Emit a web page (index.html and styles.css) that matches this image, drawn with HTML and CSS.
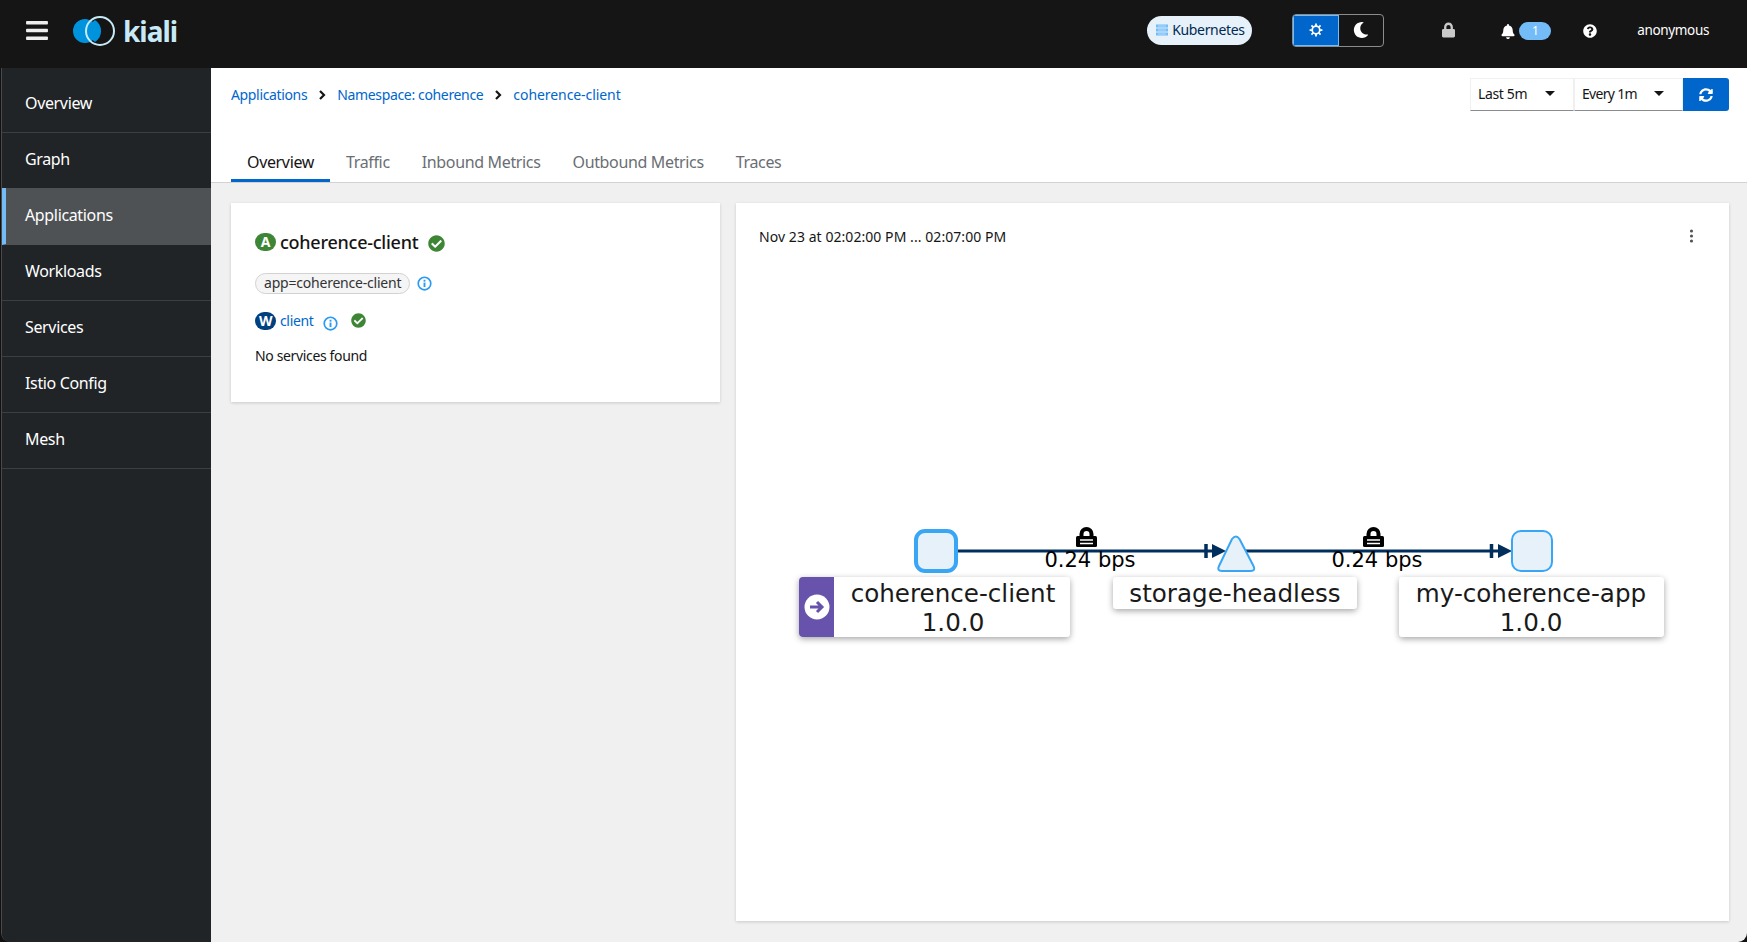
FILE: index.html
```html
<!DOCTYPE html>
<html lang="en">
<head>
    <meta charset="UTF-8">
    <title>Kiali</title>
    <link rel="stylesheet" href="styles.css">
</head>
<body>
    <svg class="sprite" xmlns="http://www.w3.org/2000/svg">
        <symbol id="i-bars" viewBox="0 0 448 512"><path d="M16 132h416c8.837 0 16-7.163 16-16V76c0-8.837-7.163-16-16-16H16C7.163 60 0 67.163 0 76v40c0 8.837 7.163 16 16 16zm0 160h416c8.837 0 16-7.163 16-16v-40c0-8.837-7.163-16-16-16H16c-8.837 0-16 7.163-16 16v40c0 8.837 7.163 16 16 16zm0 160h416c8.837 0 16-7.163 16-16v-40c0-8.837-7.163-16-16-16H16c-8.837 0-16 7.163-16 16v40c0 8.837 7.163 16 16 16z"/></symbol>
        <symbol id="i-lock" viewBox="0 0 448 512"><path d="M400 224h-24v-72C376 68.2 307.8 0 224 0S72 68.2 72 152v72H48c-26.5 0-48 21.5-48 48v192c0 26.5 21.5 48 48 48h352c26.5 0 48-21.5 48-48V272c0-26.5-21.5-48-48-48zm-104 0H152v-72c0-39.7 32.3-72 72-72s72 32.3 72 72v72z"/></symbol>
        <symbol id="i-bell" viewBox="0 0 448 512"><path d="M224 512c35.32 0 63.97-28.65 63.97-64H160.03c0 35.35 28.65 64 63.97 64zm215.39-149.71c-19.32-20.76-55.47-51.99-55.47-154.29 0-77.7-54.48-139.9-127.94-155.16V32c0-17.67-14.32-32-31.98-32s-31.98 14.33-31.98 32v20.84C118.56 68.1 64.08 130.3 64.08 208c0 102.3-36.15 133.53-55.47 154.29-6 6.45-8.66 14.16-8.61 21.71.11 16.4 12.98 32 32.1 32h383.8c19.12 0 32-15.6 32.1-32 .05-7.55-2.61-15.27-8.61-21.71z"/></symbol>
        <symbol id="i-help" viewBox="0 0 512 512"><path d="M504 256c0 136.997-111.043 248-248 248S8 392.997 8 256C8 119.083 119.043 8 256 8s248 111.083 248 248zM262.655 90c-54.497 0-89.255 22.957-116.549 63.758-3.536 5.286-2.353 12.415 2.715 16.258l34.699 26.31c5.205 3.947 12.621 3.008 16.665-2.122 17.864-22.658 30.113-35.797 57.303-35.797 20.429 0 45.698 13.148 45.698 32.958 0 14.976-12.363 22.667-32.534 33.976C247.128 238.528 216 254.941 216 296v4c0 6.627 5.373 12 12 12h56c6.627 0 12-5.373 12-12v-1.333c0-28.462 83.186-29.647 83.186-106.667 0-58.002-60.165-102-116.531-102zM256 338c-25.365 0-46 20.635-46 46 0 25.364 20.635 46 46 46s46-20.636 46-46c0-25.365-20.635-46-46-46z"/></symbol>
        <symbol id="i-check" viewBox="0 0 512 512"><path d="M504 256c0 136.967-111.033 248-248 248S8 392.967 8 256 119.033 8 256 8s248 111.033 248 248zM227.314 387.314l184-184c6.248-6.248 6.248-16.379 0-22.627l-22.627-22.627c-6.248-6.249-16.379-6.249-22.628 0L216 308.118l-70.059-70.059c-6.248-6.248-16.379-6.248-22.628 0l-22.627 22.627c-6.248 6.248-6.248 16.379 0 22.627l104 104c6.249 6.249 16.379 6.249 22.628.001z"/></symbol>
        <symbol id="i-sync" viewBox="0 0 512 512"><path d="M370.72 133.28C339.458 104.008 298.888 87.962 255.848 88c-77.458.068-144.328 53.178-162.791 126.85-1.344 5.363-6.122 9.15-11.651 9.15H24.103c-7.498 0-13.194-6.807-11.807-14.176C33.933 94.924 134.813 8 256 8c66.448 0 126.791 26.136 171.315 68.685L463.03 40.97C478.149 25.851 504 36.559 504 57.941V192c0 13.255-10.745 24-24 24H345.941c-21.382 0-32.09-25.851-16.971-40.971l41.75-41.749zM32 296h134.059c21.382 0 32.09 25.851 16.971 40.971l-41.75 41.75c31.262 29.273 71.835 45.319 114.876 45.28 77.418-.07 144.315-53.144 162.787-126.849 1.344-5.363 6.122-9.15 11.651-9.15h57.304c7.498 0 13.194 6.807 11.807 14.176C478.067 417.076 377.187 504 256 504c-66.448 0-126.791-26.136-171.315-68.685L48.97 471.03C33.851 486.149 8 475.441 8 454.059V320c0-13.255 10.745-24 24-24z"/></symbol>
        <symbol id="i-moon" viewBox="0 0 512 512"><path d="M283.211 512c78.962 0 151.079-35.925 198.857-94.792 7.068-8.708-.639-21.43-11.562-19.35-124.203 23.654-238.262-71.576-238.262-196.954 0-72.222 38.662-138.635 101.498-174.394 9.686-5.512 7.25-20.197-3.756-22.23A258.156 258.156 0 0 0 283.211 0c-141.309 0-256 114.511-256 256 0 141.309 114.511 256 256 256z"/></symbol>
        <symbol id="i-sun" viewBox="0 0 24 24"><g fill="none" stroke="currentColor"><circle cx="12" cy="12" r="6.500" stroke-width="3"/><path stroke-width="3" d="M12 1v4M12 19v4M1 12h4M19 12h4M4.200 4.200 7 7M17 17l2.800 2.800M4.200 19.800 7 17M17 7l2.800-2.800"/></g></symbol>
        <symbol id="i-info" viewBox="0 0 16 16"><circle cx="8" cy="8" r="6.700" fill="none" stroke="currentColor" stroke-width="1.800"/><rect x="7" y="7" width="2" height="4.800" fill="currentColor"/><rect x="7" y="4" width="2" height="2" fill="currentColor"/></symbol>
        <symbol id="i-chevron" viewBox="0 0 10 12"><path d="M3 2l4 4-4 4" fill="none" stroke="currentColor" stroke-width="2.200"/></symbol>
    </svg>

    <header class="topbar">
        <svg class="hamburger"><use href="#i-bars"/></svg>
        <div class="brand">
            <svg class="brand-mark" viewBox="0 0 46 32">
                <circle cx="14" cy="16" r="12" fill="#0093dd"/>
                <path d="M24 5a13 13 0 0 0 0 22a13 13 0 0 0 0 -22z" fill="#0093dd"/>
                <circle cx="29" cy="16" r="14" fill="none" stroke="#c8eaf7" stroke-width="2"/>
            </svg>
            <span class="brand-name">kiali</span>
        </div>
        <div class="cluster-pill">
            <svg class="cluster-icon" viewBox="0 0 14 14"><path d="M1 1.500h12v3H1zM1 5.500h12v3H1zM1 9.500h12v3H1z" fill="#73bcf7"/><path d="M3 3h8M3 7h8M3 11h8" stroke="#e7f1fa" stroke-width=".6"/></svg>
            Kubernetes
        </div>
        <div class="theme-toggle">
            <span class="theme-btn theme-on"><svg class="icon-sm"><use href="#i-sun"/></svg></span>
            <span class="theme-btn"><svg class="icon-moon"><use href="#i-moon"/></svg></span>
        </div>
        <svg class="top-lock"><use href="#i-lock"/></svg>
        <svg class="top-bell"><use href="#i-bell"/></svg>
        <span class="notif-badge">1</span>
        <svg class="top-help"><use href="#i-help"/></svg>
        <span class="user-name">anonymous</span>
    </header>

    <div class="layout">
        <nav class="sidebar">
            <a class="nav-item">Overview</a>
            <a class="nav-item">Graph</a>
            <a class="nav-item active">Applications</a>
            <a class="nav-item">Workloads</a>
            <a class="nav-item">Services</a>
            <a class="nav-item">Istio Config</a>
            <a class="nav-item">Mesh</a>
        </nav>

        <main class="content">
            <section class="page-head">
                <div class="crumb-row">
                    <div class="breadcrumb">
                        <a>Applications</a>
                        <svg class="crumb-sep"><use href="#i-chevron"/></svg>
                        <a>Namespace: coherence</a>
                        <svg class="crumb-sep"><use href="#i-chevron"/></svg>
                        <a class="crumb-last">coherence-client</a>
                    </div>
                    <div class="time-controls">
                        <div class="select select-range">Last 5m<span class="caret"></span></div>
                        <div class="select select-every">Every 1m<span class="caret"></span></div>
                        <button class="refresh-btn"><svg class="icon-sm"><use href="#i-sync"/></svg></button>
                    </div>
                </div>
                <div class="tabs">
                    <a class="tab tab-active">Overview</a>
                    <a class="tab">Traffic</a>
                    <a class="tab">Inbound Metrics</a>
                    <a class="tab">Outbound Metrics</a>
                    <a class="tab">Traces</a>
                </div>
            </section>

            <section class="panels">
                <div class="card card-info">
                    <div class="app-title">
                        <span class="badge badge-app">A</span>
                        <span class="app-name">coherence-client</span>
                        <svg class="icon-ok-lg"><use href="#i-check"/></svg>
                    </div>
                    <div class="label-row">
                        <span class="chip">app=coherence-client</span>
                        <svg class="icon-info"><use href="#i-info"/></svg>
                    </div>
                    <div class="workload-row">
                        <span class="badge badge-wl">W</span>
                        <a class="link">client</a>
                        <svg class="icon-info icon-low"><use href="#i-info"/></svg>
                        <svg class="icon-ok"><use href="#i-check"/></svg>
                    </div>
                    <div class="no-services">No services found</div>
                </div>

                <div class="card card-graph">
                    <div class="graph-head">
                        <span class="graph-range">Nov 23 at 02:02:00 PM ... 02:07:00 PM</span>
                        <svg class="kebab" viewBox="0 0 4 14"><circle cx="2" cy="2" r="1.600"/><circle cx="2" cy="7" r="1.600"/><circle cx="2" cy="12" r="1.600"/></svg>
                    </div>
                    <svg class="graph" viewBox="736 265 993 640">
                        <defs>
                            <filter id="label-shadow" x="-10%" y="-20%" width="120%" height="150%">
                                <feDropShadow dx="0" dy="2" stdDeviation="3" flood-color="#000" flood-opacity=".35"/>
                            </filter>
                            <g id="edge-lock">
                                <path d="M3.500 10V7a7 7 0 0 1 14 0v3h-4V7a3 3 0 0 0-6 0v3z"/>
                                <rect x="0" y="9" width="21" height="11" rx="1.500"/>
                                <path d="M4 13h13M4 16.500h13" stroke="#fff" stroke-width="1.300"/>
                            </g>
                        </defs>

                        <path class="edge" d="M958 551H1214M1240 551H1500"/>
                        <path class="edge-hash" d="M1206 544v14M1491.500 544v14"/>
                        <path class="edge-head" d="M1212 544l14 7-14 7zM1498 544l14 7-14 7z"/>

                        <rect class="node node-root" x="916" y="531" width="40" height="40" rx="9"/>
                        <path class="node" d="M1232 539Q1236 534 1239.500 539L1253.500 566Q1256 571 1250.500 571H1222Q1216.500 571 1219 566Z"/>
                        <rect class="node" x="1512" y="531" width="40" height="40" rx="9"/>

                        <use href="#edge-lock" x="1076" y="527"/>
                        <use href="#edge-lock" x="1363" y="527"/>
                        <text class="edge-text" x="1090" y="567">0.24 bps</text>
                        <text class="edge-text" x="1377" y="567">0.24 bps</text>

                        <g>
                            <rect class="label-box" x="799" y="577" width="271" height="60" rx="4"/>
                            <path class="label-tag" d="M834 577v60h-31a4 4 0 0 1-4-4v-52a4 4 0 0 1 4-4z"/>
                            <circle cx="817" cy="607" r="12.500" fill="#fff"/>
                            <path d="M810 607h11M817 602l5 5-5 5" fill="none" stroke="#6753ac" stroke-width="3"/>
                            <text class="label-text" x="953" y="602">coherence-client</text>
                            <text class="label-text" x="953" y="631">1.0.0</text>
                        </g>
                        <g>
                            <rect class="label-box" x="1113" y="577" width="244" height="32" rx="4"/>
                            <text class="label-text" x="1235" y="602">storage-headless</text>
                        </g>
                        <g>
                            <rect class="label-box" x="1399" y="577" width="265" height="60" rx="4"/>
                            <text class="label-text" x="1531" y="602">my-coherence-app</text>
                            <text class="label-text" x="1531" y="631">1.0.0</text>
                        </g>
                    </svg>
                </div>
            </section>
        </main>
    </div>
</body>
</html>
```

FILE: styles.css
```css
* {
    margin: 0;
    padding: 0;
    box-sizing: border-box;
}

body {
    display: flex;
    flex-direction: column;
    height: 942px;
    overflow: hidden;
    background: #111;
    font-family: 'Noto Sans', sans-serif;
    font-size: 14px;
    letter-spacing: -0.025em;
    color: #151515;
}

.sprite {
    display: none;
}

/* top bar */
.topbar {
    display: flex;
    align-items: center;
    height: 68px;
    flex-shrink: 0;
    background: #151515;
    color: #fff;
    padding: 0 38px 0 26px;
}

.hamburger {
    width: 22px;
    height: 25px;
    fill: #eee;
    margin-bottom: 8px;
}

.brand {
    display: flex;
    align-items: center;
    margin-left: 23px;
    margin-bottom: 6px;
}

.brand-mark {
    width: 46px;
    height: 32px;
}

.brand-name {
    font-size: 28px;
    font-weight: 700;
    line-height: 32px;
    letter-spacing: -1px;
    margin-left: 6px;
    color: #c8eaf7;
}

.cluster-pill {
    display: flex;
    align-items: center;
    gap: 3px;
    width: 105px;
    height: 29px;
    margin-left: auto;
    padding-left: 8px;
    padding-bottom: 1px;
    border-radius: 15px;
    background: #e7f1fa;
    color: #002952;
    font-size: 14px;
    margin-bottom: 8px;
}

.cluster-icon {
    width: 14px;
    height: 14px;
}

.theme-toggle {
    display: flex;
    width: 92px;
    height: 33px;
    margin-left: 40px;
    margin-bottom: 8px;
    border: 1px solid #8a8d90;
    border-radius: 4px;
    overflow: hidden;
}

.theme-btn {
    flex: 1;
    display: flex;
    align-items: center;
    justify-content: center;
    color: #fff;
}

.theme-on {
    background: #06c;
    box-shadow: inset 0 0 0 1px #73bcf7;
    flex: 0 0 46px;
}

.icon-sm {
    width: 14px;
    height: 14px;
    fill: currentColor;
}

.icon-moon {
    width: 16px;
    height: 16px;
    fill: currentColor;
}

.top-lock {
    width: 13px;
    height: 16px;
    margin-left: 58px;
    fill: #c9c9c9;
    margin-bottom: 8px;
}

.top-bell {
    width: 14px;
    height: 15px;
    margin-left: 46px;
    fill: #fff;
    margin-bottom: 6px;
}

.notif-badge {
    width: 32px;
    height: 18px;
    margin-left: 4px;
    margin-bottom: 7px;
    border-radius: 9px;
    background: #73bcf7;
    color: #fff;
    font-size: 12px;
    line-height: 18px;
    text-align: center;
}

.top-help {
    width: 14px;
    height: 14px;
    margin-left: 32px;
    fill: #fff;
    margin-bottom: 6px;
}

.user-name {
    margin-left: 40px;
    margin-bottom: 8px;
    font-size: 13.500px;
}

/* sidebar + main */
.layout {
    display: flex;
    flex: 1;
    min-height: 0;
    margin-left: 1px;
    border-left: 1px solid #4a4a4a;
    border-radius: 0 0 9px 9px;
    overflow: hidden;
}

.sidebar {
    width: 209px;
    flex-shrink: 0;
    padding-top: 9px;
    background: #212427;
}

.nav-item {
    display: block;
    height: 56px;
    padding-left: 23px;
    line-height: 53px;
    font-size: 16px;
    color: #fff;
    border-bottom: 1px solid #3c3f42;
}

.nav-item.active {
    height: 57px;
    margin-top: -1px;
    line-height: 55px;
    background: #4f5255;
    border-left: 4px solid #73bcf7;
    padding-left: 19px;
    border-bottom-color: #4f5255;
}

.content {
    flex: 1;
    min-width: 0;
    background: #f0f0f0;
}

.page-head {
    height: 115px;
    padding: 10px 18px 0 20px;
    background: #fff;
    border-bottom: 1px solid #d2d2d2;
}

.crumb-row {
    display: flex;
    justify-content: space-between;
    align-items: flex-start;
}

.breadcrumb {
    display: flex;
    align-items: center;
    height: 33px;
    color: #06c;
    font-size: 14px;
}

.crumb-last {
    letter-spacing: -0.005em;
}

.crumb-sep {
    width: 10px;
    height: 12px;
    margin: 0 10px;
    color: #151515;
}

.time-controls {
    display: flex;
}

.select {
    display: flex;
    align-items: center;
    justify-content: space-between;
    height: 33px;
    padding: 0 18px 2px 7px;
    border: 1px solid #f0f0f0;
    border-bottom-color: #8a8d90;
    font-size: 14px;
}

.select-range {
    width: 104px;
}

.select-every {
    width: 109px;
    letter-spacing: -0.05em;
}

.caret {
    width: 0;
    height: 0;
    border-left: 5px solid transparent;
    border-right: 5px solid transparent;
    border-top: 5px solid #151515;
}

.refresh-btn {
    display: flex;
    align-items: center;
    justify-content: center;
    width: 46px;
    height: 33px;
    border: none;
    border-radius: 0 3px 3px 0;
    background: #06c;
    color: #fff;
}

.tabs {
    display: flex;
    margin-top: 33px;
}

.tab {
    height: 38px;
    padding: 0 16px;
    line-height: 36px;
    font-size: 16px;
    color: #6a6e73;
}

.tab-active {
    color: #151515;
    border-bottom: 3px solid #06c;
}

.panels {
    display: flex;
    gap: 16px;
    align-items: flex-start;
    padding: 20px 18px 0 20px;
}

.card {
    background: #fff;
    box-shadow: 0 1px 3px rgba(3, 3, 3, 0.16);
}

.card-info {
    width: 489px;
    height: 199px;
    padding: 28px 24px 0;
}

.badge {
    display: inline-block;
    width: 21px;
    height: 18px;
    border-radius: 9px;
    color: #fff;
    font-size: 14px;
    font-weight: 700;
    line-height: 18px;
    text-align: center;
}

.badge-app {
    background: #3e8635;
}

.badge-wl {
    background: #004080;
}

.app-title {
    display: flex;
    align-items: center;
    height: 22px;
}

.app-name {
    margin-left: 4px;
    font-size: 18px;
    font-weight: 500;
    letter-spacing: -0.014em;
}

.icon-ok-lg {
    width: 17px;
    height: 17px;
    margin-left: 10px;
    margin-top: 2px;
    fill: #3e8635;
}

.label-row {
    display: flex;
    align-items: center;
    margin-top: 20px;
}

.chip {
    height: 21px;
    padding: 0 8px;
    border: 1px solid #d2d2d2;
    border-radius: 11px;
    background: #f5f5f5;
    font-size: 14px;
    letter-spacing: -0.015em;
    line-height: 18px;
    color: #333;
}

.icon-info {
    width: 15px;
    height: 15px;
    margin-left: 7px;
    color: #2b9af3;
}

.workload-row {
    display: flex;
    align-items: center;
    margin-top: 18px;
    height: 18px;
}

.link {
    margin-left: 4px;
    margin-bottom: 2px;
    color: #06c;
    font-size: 14px;
}

.icon-low {
    margin-left: 10px;
    margin-top: 4px;
}

.icon-ok {
    width: 15px;
    height: 15px;
    margin-left: 13px;
    margin-bottom: 2px;
    fill: #3e8635;
}

.no-services {
    margin-top: 16px;
    font-size: 14px;
    line-height: 19px;
}

.card-graph {
    width: 993px;
    height: 718px;
}

.graph-head {
    display: flex;
    justify-content: space-between;
    align-items: center;
    height: 62px;
    padding: 4px 35px 0 23px;
}

.graph-range {
    font-size: 14px;
    letter-spacing: 0.06px;
    color: #151515;
}

.kebab {
    width: 5px;
    height: 14px;
    fill: #555;
}

.graph {
    display: block;
    width: 993px;
    height: 640px;
}

/* graph drawing */
.edge {
    fill: none;
    stroke: #002f5d;
    stroke-width: 3;
}

.edge-hash {
    fill: none;
    stroke: #002f5d;
    stroke-width: 3.500;
}

.edge-head {
    fill: #002f5d;
}

.node {
    fill: #e7f1fa;
    stroke: #39a5f5;
    stroke-width: 2;
}

.node-root {
    stroke-width: 4;
}

.edge-text {
    font-family: 'DejaVu Sans', sans-serif;
    font-size: 21px;
    letter-spacing: 0;
    text-anchor: middle;
    fill: #000;
}

.label-box {
    fill: #fff;
    filter: url(#label-shadow);
}

.label-tag {
    fill: #6753ac;
}

.label-text {
    font-family: 'DejaVu Sans', sans-serif;
    font-size: 24.600px;
    letter-spacing: 0;
    text-anchor: middle;
    fill: #1a1a1a;
}
```
